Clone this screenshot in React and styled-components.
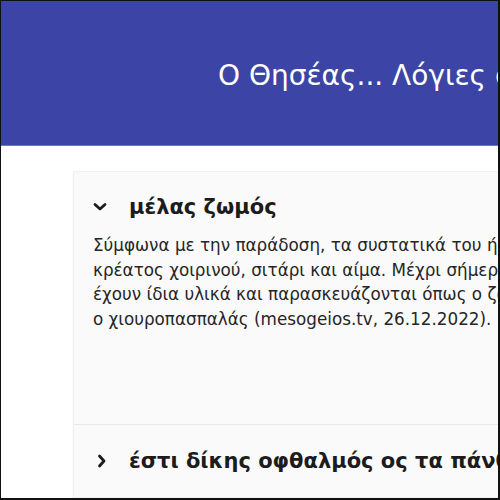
import React from "react";
import styled, { createGlobalStyle } from "styled-components";

const GlobalStyle = createGlobalStyle`
  html, body {
    margin: 0;
    padding: 0;
    background: #fff;
  }
  body {
    font-family: "DejaVu Sans", Verdana, sans-serif;
    color: #222;
  }
`;

const Frame = styled.div`
  width: 500px;
  height: 500px;
  box-sizing: border-box;
  border-style: solid;
  border-color: #111;
  border-width: 1px 2px 2px 1px;
  overflow: hidden;
  background: #fff;
`;

const Page = styled.div`
  width: 1000px;
`;

const Header = styled.header`
  height: 144px;
  background: #3c45a6;
  display: flex;
  align-items: center;
  padding-left: 217px;
  border-bottom: 1px solid #6f76c4;
`;

const Title = styled.h1`
  margin: 0;
  color: #fff;
  font-size: 28px;
  font-weight: 400;
  white-space: nowrap;
  padding-top: 4px;
`;

const Accordion = styled.div`
  margin: 25px 0 0 72px;
  width: 860px;
  background: #fafafa;
  border: 1px solid #f0f0f0;
  box-shadow: 0 1px 2px rgba(0, 0, 0, 0.04);
`;

const Item = styled.section`
  border-top: ${(p) => (p.$first ? "none" : "1px solid #e9e9e9")};
  padding-bottom: ${(p) => (p.$open ? "92px" : "0")};
`;

const ItemHead = styled.div`
  display: flex;
  align-items: center;
  box-sizing: border-box;
  height: ${(p) => (p.$open ? "61px" : "72px")};
  padding: ${(p) => (p.$open ? "8px 0 0 19px" : "0 0 0 19px")};
`;

const Chevron = styled.span`
  width: 36px;
  display: flex;
  align-items: center;
  padding-left: ${(p) => (p.$open ? "0" : "4px")};
  box-sizing: border-box;
`;

const ItemTitle = styled.h2`
  margin: 0;
  font-size: 21px;
  font-weight: 700;
  color: #1c1c1c;
  white-space: nowrap;
`;

const ItemBody = styled.p`
  margin: 0;
  padding: 0 19px;
  font-size: 16.8px;
  line-height: 24.7px;
  color: #262626;
  white-space: nowrap;
`;

const Down = () => (
  <svg width="14" height="10" viewBox="0 0 14 10">
    <polyline points="2,2.5 7,7 12,2.5" fill="none" stroke="#1c1c1c" strokeWidth="2.8" strokeLinecap="round" strokeLinejoin="round" />
  </svg>
);

const Right = () => (
  <svg width="10" height="14" viewBox="0 0 10 14">
    <polyline points="2.5,2 7,7 2.5,12" fill="none" stroke="#1c1c1c" strokeWidth="2.8" strokeLinecap="round" strokeLinejoin="round" />
  </svg>
);

const items = [
  {
    title: "μέλας ζωμός",
    open: true,
    lines: [
      "Σύμφωνα με την παράδοση, τα συστατικά του ήταν ξίδι, αλάτι, πόδια και",
      "κρέατος χοιρινού, σιτάρι και αίμα. Μέχρι σήμερα, στη Μάνη, φαγητά που",
      "έχουν ίδια υλικά και παρασκευάζονται όπως ο ζωμός είναι η γουρνοπούλα και",
      "ο χιουροπασπαλάς (mesogeios.tv, 26.12.2022).",
    ],
  },
  { title: "έστι δίκης οφθαλμός ος τα πάνθ' ορά", open: false },
];

export default function App() {
  return (
    <>
      <GlobalStyle />
      <Frame>
        <Page>
          <Header>
            <Title>Ο Θησέας... Λόγιες οφθαλμοί και μύθοι</Title>
          </Header>
          <Accordion>
            {items.map((it, i) => (
              <Item key={i} $first={i === 0} $open={it.open}>
                <ItemHead $open={it.open}>
                  <Chevron $open={it.open}>{it.open ? <Down /> : <Right />}</Chevron>
                  <ItemTitle>{it.title}</ItemTitle>
                </ItemHead>
                {it.open && (
                  <ItemBody>
                    {it.lines.map((l, j) => (
                      <React.Fragment key={j}>
                        {l}
                        {j < it.lines.length - 1 && <br />}
                      </React.Fragment>
                    ))}
                  </ItemBody>
                )}
              </Item>
            ))}
          </Accordion>
        </Page>
      </Frame>
    </>
  );
}
